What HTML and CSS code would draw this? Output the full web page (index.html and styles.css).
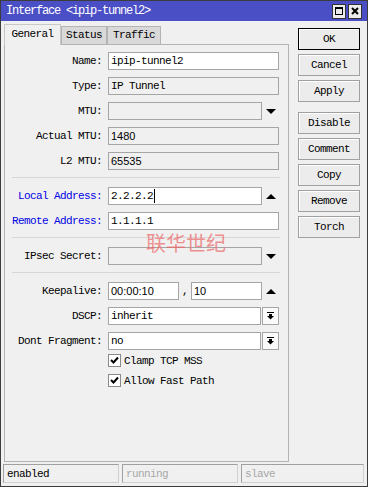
FILE: index.html
```html
<!DOCTYPE html>
<html lang="en">
<head>
  <meta charset="UTF-8" />
  <title>Interface &lt;ipip-tunnel2&gt;</title>
  <link rel="stylesheet" href="styles.css">
</head>
<body>
  <div class="window">
    <div class="titlebar">
      <span class="title">Interface &lt;ipip-tunnel2&gt;</span>
      <div class="tb-buttons">
        <span class="tb-btn">
          <svg width="8" height="8" viewBox="0 0 8 8"><rect x="0.5" y="0.5" width="7" height="7" fill="none" stroke="#000"/><rect x="0" y="0" width="8" height="2" fill="#000"/></svg>
        </span>
        <span class="tb-btn">
          <svg width="8" height="8" viewBox="0 0 8 8"><path d="M1 1 L7 7 M7 1 L1 7" stroke="#000" stroke-width="2"/></svg>
        </span>
      </div>
    </div>

    <div class="main">
      <div class="left">
        <div class="tabs">
          <div class="tab active tab-general">General</div>
          <div class="tab tab-status">Status</div>
          <div class="tab tab-traffic">Traffic</div>
        </div>
        <div class="panel">
          <div class="row">
            <span class="label">Name:</span>
            <div class="ctrl"><div class="field">ipip-tunnel2</div></div>
          </div>
          <div class="row">
            <span class="label">Type:</span>
            <div class="ctrl"><div class="field ro">IP Tunnel</div></div>
          </div>
          <div class="row">
            <span class="label">MTU:</span>
            <div class="ctrl"><div class="field ro"></div><span class="arrow"><i class="tri-down"></i></span></div>
          </div>
          <div class="row">
            <span class="label">Actual MTU:</span>
            <div class="ctrl"><div class="field ro num">1480</div></div>
          </div>
          <div class="row">
            <span class="label">L2 MTU:</span>
            <div class="ctrl"><div class="field ro num">65535</div></div>
          </div>

          <div class="sep"></div>

          <div class="row">
            <span class="label blue">Local Address:</span>
            <div class="ctrl"><div class="field">2.2.2.2<span class="caret"></span></div><span class="arrow"><i class="tri-up"></i></span></div>
          </div>
          <div class="row">
            <span class="label blue">Remote Address:</span>
            <div class="ctrl"><div class="field">1.1.1.1</div></div>
          </div>

          <div class="sep"></div>

          <div class="row">
            <span class="label">IPsec Secret:</span>
            <div class="ctrl"><div class="field ro"></div><span class="arrow"><i class="tri-down"></i></span></div>
          </div>

          <div class="sep"></div>

          <div class="row">
            <span class="label">Keepalive:</span>
            <div class="ctrl">
              <div class="field short num">00:00:10</div>
              <span class="comma">,</span>
              <div class="field num">10</div>
              <span class="arrow"><i class="tri-up"></i></span>
            </div>
          </div>
          <div class="row">
            <span class="label">DSCP:</span>
            <div class="ctrl">
              <div class="field">inherit</div>
              <span class="drop"><svg width="7" height="8" viewBox="0 0 7 8"><rect x="0" y="0" width="7" height="1"/><rect x="2" y="2" width="3" height="2"/><path d="M0 4 H7 L3.5 7.5 Z"/></svg></span>
            </div>
          </div>
          <div class="row">
            <span class="label">Dont Fragment:</span>
            <div class="ctrl">
              <div class="field">no</div>
              <span class="drop"><svg width="7" height="8" viewBox="0 0 7 8"><rect x="0" y="0" width="7" height="1"/><rect x="2" y="2" width="3" height="2"/><path d="M0 4 H7 L3.5 7.5 Z"/></svg></span>
            </div>
          </div>

          <div class="checks">
            <label class="check">
              <span class="box"><svg width="11" height="11" viewBox="0 0 11 11"><path d="M2 5 L4.5 7.5 L9 2.5" fill="none" stroke="#000" stroke-width="2"/></svg></span>
              Clamp TCP MSS
            </label>
            <label class="check">
              <span class="box"><svg width="11" height="11" viewBox="0 0 11 11"><path d="M2 5 L4.5 7.5 L9 2.5" fill="none" stroke="#000" stroke-width="2"/></svg></span>
              Allow Fast Path
            </label>
          </div>
        </div>
      </div>

      <div class="buttons">
        <button class="btn default">OK</button>
        <button class="btn">Cancel</button>
        <button class="btn">Apply</button>
        <button class="btn spaced">Disable</button>
        <button class="btn">Comment</button>
        <button class="btn">Copy</button>
        <button class="btn">Remove</button>
        <button class="btn">Torch</button>
      </div>
    </div>

    <div class="statusbar">
      <div class="seg">enabled</div>
      <div class="seg dim">running</div>
      <div class="seg dim">slave</div>
    </div>

    <div class="watermark">联华世纪</div>
  </div>
</body>
</html>
```

FILE: styles.css
```css
* {
  box-sizing: border-box;
}

html, body {
  margin: 0;
  padding: 0;
}

body {
  font-family: "Liberation Mono", "DejaVu Sans Mono", monospace;
  font-size: 11px;
  letter-spacing: -0.6px;
  color: #000;
  background: #f0f0f0;
}

.window {
  position: relative;
  width: 368px;
  height: 487px;
  border: 1px solid #3c3c3c;
  background: #f0f0f0;
  display: flex;
  flex-direction: column;
}

/* title bar */
.titlebar {
  flex: none;
  height: 20px;
  background: #4b4fc6;
  color: #fff;
  display: flex;
  align-items: center;
  padding: 0 5px 0 5px;
}

.title {
  flex: 1;
  font-size: 12px;
  letter-spacing: -1.2px;
}

.tb-buttons {
  display: flex;
  gap: 2px;
}

.tb-btn {
  width: 14px;
  height: 15px;
  border: 1px solid #333;
  background: #ececec;
  display: flex;
  align-items: center;
  justify-content: center;
}

/* main area */
.main {
  flex: 1;
  display: flex;
  padding: 3px 0 0 3px;
  min-height: 0;
}

.left {
  width: 285px;
  display: flex;
  flex-direction: column;
}

.tabs {
  display: flex;
  align-items: flex-end;
  height: 20px;
  flex: none;
}

.tab {
  height: 18px;
  border: 1px solid #b4b4b4;
  border-bottom: none;
  background: #d9d9d9;
  display: flex;
  align-items: center;
  justify-content: center;
  padding-bottom: 1px;
}

.tab.active {
  height: 21px;
  margin-bottom: -1px;
  background: #f0f0f0;
  position: relative;
  z-index: 1;
  border-color: #c8c8c8;
  align-items: flex-start;
  padding-top: 3px;
}

.tab-general { width: 57px; }
.tab-status { width: 46px; }
.tab-traffic { width: 54px; }

.panel {
  flex: 1;
  border: 1px solid #b4b4b4;
  background: #f0f0f0;
  padding: 7px 9px 0 0;
  display: flex;
  flex-direction: column;
  gap: 7px;
}

.row {
  display: grid;
  grid-template-columns: 97px 1fr;
  column-gap: 6px;
  align-items: center;
  height: 18px;
}

.label {
  text-align: right;
  white-space: nowrap;
}

.label.blue {
  color: #0000e6;
}

.ctrl {
  display: flex;
  height: 18px;
}

.field {
  flex: 1;
  min-width: 0;
  border: 1px solid #a5a5a5;
  background: #fff;
  padding: 0 2px;
  display: flex;
  align-items: center;
  white-space: nowrap;
  overflow: hidden;
}

.field.ro {
  background: #f0f0f0;
}

.field.num {
  font-family: "Liberation Sans", Arial, sans-serif;
  letter-spacing: 0;
}

.field.short {
  flex: none;
  width: 71px;
}

.caret {
  display: inline-block;
  width: 1px;
  height: 14px;
  background: #000;
  margin-left: 1px;
}

.comma {
  width: 12px;
  padding-left: 3px;
  display: flex;
  align-items: center;
}

.arrow {
  flex: none;
  width: 17px;
  display: flex;
  align-items: center;
  justify-content: center;
}

.tri-down {
  width: 0;
  height: 0;
  border-left: 5px solid transparent;
  border-right: 5px solid transparent;
  border-top: 5px solid #000;
}

.tri-up {
  width: 0;
  height: 0;
  border-left: 5px solid transparent;
  border-right: 5px solid transparent;
  border-bottom: 5px solid #000;
}

.drop {
  flex: none;
  width: 17px;
  margin-left: 1px;
  border: 1px solid #a5a5a5;
  background: #fafafa;
  display: flex;
  align-items: center;
  justify-content: center;
}

.sep {
  height: 1px;
  background: #d7d7d7;
  margin: 0 -1px 2px 7px;
}

.checks {
  display: flex;
  flex-direction: column;
  gap: 7px;
  margin-top: -3px;
  padding-left: 103px;
}

.check {
  display: flex;
  align-items: center;
  gap: 3px;
  height: 13px;
}

.box {
  width: 13px;
  height: 13px;
  border: 1px solid #8a8a8a;
  background: #fff;
  display: flex;
  align-items: center;
  justify-content: center;
}

/* right buttons */
.buttons {
  width: 62px;
  margin-left: 9px;
  padding-top: 4px;
  display: flex;
  flex-direction: column;
  gap: 4px;
}

.btn {
  height: 22px;
  margin: 0;
  padding: 0;
  font: inherit;
  letter-spacing: inherit;
  color: #000;
  border: 1px solid #a0a0a0;
  background: #ececec;
  box-shadow: inset 1px 1px 0 #fff;
}

.btn.default {
  border-color: #000;
}

.btn.spaced {
  margin-top: 6px;
}

/* status bar */
.statusbar {
  flex: none;
  height: 24px;
  display: grid;
  grid-template-columns: 116px 116px 1fr;
  column-gap: 3px;
  padding: 2px 3px 3px 2px;
}

.seg {
  border: 1px solid;
  border-color: #a0a0a0 #d0d0d0 #d0d0d0 #a0a0a0;
  padding-left: 3px;
  display: flex;
  align-items: center;
}

.seg.dim {
  color: #a8a8a8;
}

.watermark {
  position: absolute;
  left: 145px;
  top: 227px;
  font-family: "Noto Sans CJK SC", sans-serif;
  font-size: 20px;
  letter-spacing: 0;
  color: rgba(238, 100, 100, 0.7);
  pointer-events: none;
}
```
